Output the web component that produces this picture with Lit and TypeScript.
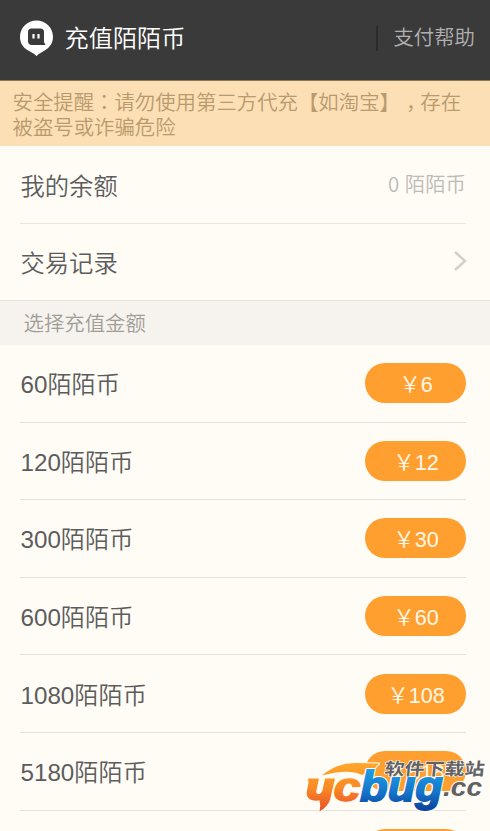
import { LitElement, html, css } from "lit";
import { customElement, property } from "lit/decorators.js";

@customElement("site-mark")
class SiteMark extends LitElement {
  static styles = css`
    :host { display: block; }
    svg { display: block; overflow: visible; }
    .latin { font-family: "Liberation Sans", Arial, sans-serif; font-weight: 700; font-style: italic; }
    .cjk { font-family: "Noto Sans CJK SC", sans-serif; font-weight: 700; font-size: 17px; }
    .halo { paint-order: stroke; stroke: #fffdf6; stroke-width: 2px; stroke-linejoin: round; }
    .wide { stroke-width: 4px; }
    .thin { stroke-width: 1.2px; }
  `;
  render() {
    return html`<svg width="190" height="71" viewBox="300 760 190 71">
      <defs>
        <linearGradient id="warm" gradientUnits="userSpaceOnUse" x1="0" y1="765" x2="0" y2="811">
          <stop offset="0" stop-color="#ffa52a" /><stop offset=".5" stop-color="#f98a25" /><stop offset="1" stop-color="#e9502a" />
        </linearGradient>
        <linearGradient id="cool" gradientUnits="userSpaceOnUse" x1="0" y1="765" x2="0" y2="811">
          <stop offset="0" stop-color="#22a5ea" /><stop offset=".6" stop-color="#1474c9" /><stop offset="1" stop-color="#0b3f9a" />
        </linearGradient>
      </defs>
      <path class="halo" fill="url(#warm)" d="M322 775.500C332 767 343 763 356 763L379 763.500L375 768L362 775C352 770 338 771 322 775.500Z" />
      <path class="halo" fill="url(#warm)" d="M308 778.500H319L316.500 790Q315.500 794 318.500 794Q321.500 794 322.500 790L325 778.500H335L330 800Q327.500 807 319.500 811.500Q321 806 319.500 800.500C309 801.500 305.500 797 307 790.500L308.500 782.500Z" />
      <text class="latin" x="333.500" y="800.500" font-size="41" textLength="27" lengthAdjust="spacingAndGlyphs" fill="url(#warm)" stroke="url(#warm)" stroke-width="1.400">c</text>
      <text class="latin halo wide" x="360" y="800.500" font-size="43" textLength="83" lengthAdjust="spacingAndGlyphs" fill="url(#cool)">bug</text>
      <text class="latin" aria-hidden="true" x="360" y="800.500" font-size="43" textLength="83" lengthAdjust="spacingAndGlyphs" fill="url(#cool)" stroke="url(#cool)" stroke-width="1.800">bug</text>
      <text class="latin halo" x="443" y="796" font-size="26" textLength="39" lengthAdjust="spacingAndGlyphs" fill="#606164">.cc</text>
      <text class="cjk halo thin" transform="translate(384 775) skewX(-6)" textLength="100" lengthAdjust="spacingAndGlyphs" fill="#626266">软件下载站</text>
    </svg>`;
  }
}

@customElement("recharge-row")
class RechargeRow extends LitElement {
  @property({ type: Number }) coins = 0;
  @property({ type: Number }) price = 0;
  static styles = css`
    :host {
      display: flex; align-items: center; justify-content: space-between;
      box-sizing: border-box; height: 77.6px; margin: 0 24px 0 20px;
      border-bottom: 1px solid #e5e2dc; color: #5c5c5d; font-size: 24.2px;
    }
    .label { padding: 0 0 1px 0.5px; }
    .price {
      box-sizing: border-box; width: 101px; height: 40px; padding: 3px 0 0 1px; border: 0; border-radius: 20px;
      background: #ff9f2f; color: #fff8e8; font: inherit; font-size: 21.6px; line-height: 37px;
      text-align: center;
    }
  `;
  render() {
    return html`<span class="label">${this.coins}陌陌币</span><button class="price">￥${this.price}</button>`;
  }
}

@customElement("app-root")
class AppRoot extends LitElement {
  static styles = css`
    :host {
      display: block; position: relative; height: 831px; overflow: hidden; background: #fffcf6;
      font-family: "Liberation Sans", "Noto Sans CJK SC", sans-serif; font-weight: 350;
      text-spacing-trim: space-all;
    }
    .bar {
      display: flex; align-items: center; box-sizing: border-box; height: 81px; padding: 0 15px 4px 19px;
      background: #3a3a3a; color: #fff; border-bottom: 1px solid #8a7557;
    }
    .logo { display: block; width: 35px; height: 36px; }
    .title { flex: 1; margin: -3px 0 0 10.5px; font-size: 24.2px; }
    .help { padding-left: 15.5px; border-left: 2px solid #2b2b2b; color: #b0b0b0; font-size: 20.4px; line-height: 25px; }
    .notice {
      box-sizing: border-box; height: 65px; padding: 8px 12px 0 12.5px; background: #fcdfb5;
      color: #b99a6d; font-size: 20.4px; line-height: 24.6px; white-space: nowrap;
    }
    .colon { font-family: "Noto Sans CJK JP", sans-serif; }
    .comma { padding-left: 6px; margin-right: -6px; }
    .row {
      display: flex; align-items: center; justify-content: space-between; box-sizing: border-box;
      margin: 0 24px 0 20px; padding: 0 0 1px 0.5px; color: #5c5c5d; font-size: 24.3px; height: 76px;
    }
    .balance { border-bottom: 1px solid #ece8d9; height: 78px; }
    .amount { color: #bdbbb7; font-size: 20.4px; padding-bottom: 2px; }
    .zero { font-family: "Noto Sans CJK SC", sans-serif; }
    .chevron { display: block; width: 14px; height: 22px; margin: -2px -1px 0 0; }
    .section {
      box-sizing: border-box; height: 45px; padding-left: 23.5px; border-top: 1px solid #e5e2dc;
      background: #f6f3ee; color: #a09d96; font-size: 20.4px; line-height: 46px;
    }
    .mark { position: absolute; left: 300px; top: 760px; }
  `;
  private packs = [[60, 6], [120, 12], [300, 30], [600, 60], [1080, 108], [5180, 518], [9980, 998]];
  render() {
    return html`
      <header class="bar">
        <svg class="logo" viewBox="0 0 35 36">
          <path fill="#fff" d="M17.500 0.500C26.500 .5 34 7.500 34 17C34 25 28.500 29 24 31.500C21 33 19 34.500 17.500 36C16 34.500 14 33 11 31.500C6 29 1 25 1 17C1 7.500 8.500 .5 17.500 .5Z" />
          <path fill="#3a3a3a" d="M12.500 8.500H21.500Q25 8.500 25 12V22L26.500 25H13Q9 25 9 21V12Q9 8.500 12.500 8.500Z" />
          <path stroke="#fff" stroke-width="2.200" d="M14.500 14V18.500M19.500 14V18.500" />
        </svg>
        <span class="title">充值陌陌币</span>
        <span class="help">支付帮助</span>
      </header>
      <div class="notice">安全提醒<span class="colon" lang="ja">：</span>请勿使用第三方代充【如淘宝】<span class="comma">，</span>存在<br />被盗号或诈骗危险</div>
      <div class="row balance"><span>我的余额</span><span class="amount"><span class="zero">0</span> 陌陌币</span></div>
      <div class="row"><span>交易记录</span>
        <svg class="chevron" viewBox="0 0 14 22"><path fill="none" stroke="#d2d0cb" stroke-width="2.500" d="M2 2L12 11L2 20" /></svg>
      </div>
      <div class="section">选择充值金额</div>
      ${this.packs.map(([c, p]) => html`<recharge-row .coins=${c} .price=${p}></recharge-row>`)}
      <site-mark class="mark"></site-mark>
    `;
  }
}
